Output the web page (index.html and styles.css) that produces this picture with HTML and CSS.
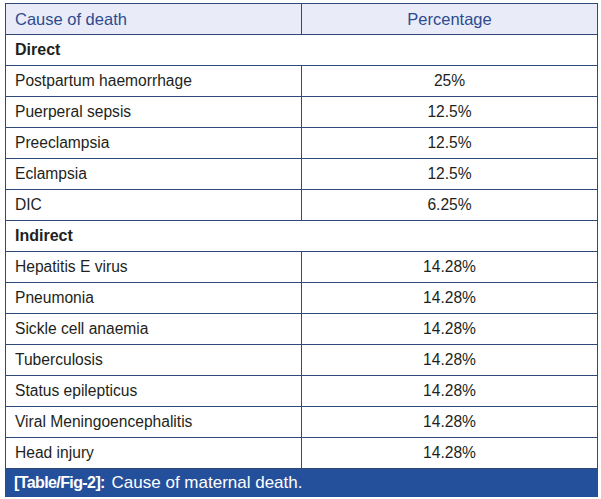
FILE: index.html
```html
<!DOCTYPE html>
<html>
<head>
<meta charset="utf-8">
<link rel="stylesheet" href="styles.css">
</head>
<body>
<div class="wrap">
<table class="tbl">
  <thead>
    <tr><th class="c1">Cause of death</th><th class="c2">Percentage</th></tr>
  </thead>
  <tbody>
    <tr class="grp"><td colspan="2">Direct</td></tr>
    <tr><td>Postpartum haemorrhage</td><td class="num">25%</td></tr>
    <tr><td>Puerperal sepsis</td><td class="num">12.5%</td></tr>
    <tr><td>Preeclampsia</td><td class="num">12.5%</td></tr>
    <tr><td>Eclampsia</td><td class="num">12.5%</td></tr>
    <tr><td>DIC</td><td class="num">6.25%</td></tr>
    <tr class="grp"><td colspan="2">Indirect</td></tr>
    <tr><td>Hepatitis E virus</td><td class="num">14.28%</td></tr>
    <tr><td>Pneumonia</td><td class="num">14.28%</td></tr>
    <tr><td>Sickle cell anaemia</td><td class="num">14.28%</td></tr>
    <tr><td>Tuberculosis</td><td class="num">14.28%</td></tr>
    <tr><td>Status epilepticus</td><td class="num">14.28%</td></tr>
    <tr><td>Viral Meningoencephalitis</td><td class="num">14.28%</td></tr>
    <tr><td>Head injury</td><td class="num">14.28%</td></tr>
  </tbody>
</table>
<div class="caption"><b>[Table/Fig-2]:</b> Cause of maternal death.</div>
</div>
</body>
</html>
```

FILE: styles.css
```css
html, body {
  margin: 0;
  padding: 0;
  background: #fff;
}
.wrap {
  margin: 3px 0 0 5px;
  width: 593px;
  font-family: "Liberation Sans", Arial, sans-serif;
}
.tbl {
  width: 593px;
  border-collapse: collapse;
  table-layout: fixed;
  font-size: 15.6px;
  color: #231f20;
}
.tbl th, .tbl td {
  border: 1px solid #2f4a78;
  height: 31px;
  padding: 0 0 0 9px;
  box-sizing: border-box;
  text-align: left;
  vertical-align: middle;
}
.tbl th {
  background: #e9ecf8;
  color: #2c4b8e;
  font-weight: normal;
  font-size: 16.5px;
}
.tbl th.c1 { width: 296px; }
.tbl th.c2 { text-align: center; padding: 0; }
.tbl td.num { text-align: center; padding: 0; }
.grp td { font-weight: bold; font-size: 16px; }
.caption {
  background: #244f9b;
  color: #fff;
  font-size: 17px;
  height: 28px;
  line-height: 28px;
  padding-left: 9px;
  box-sizing: border-box;
}
.caption b { font-weight: bold; font-size: 16px; letter-spacing: -0.6px; margin-right: 2px; }
```
